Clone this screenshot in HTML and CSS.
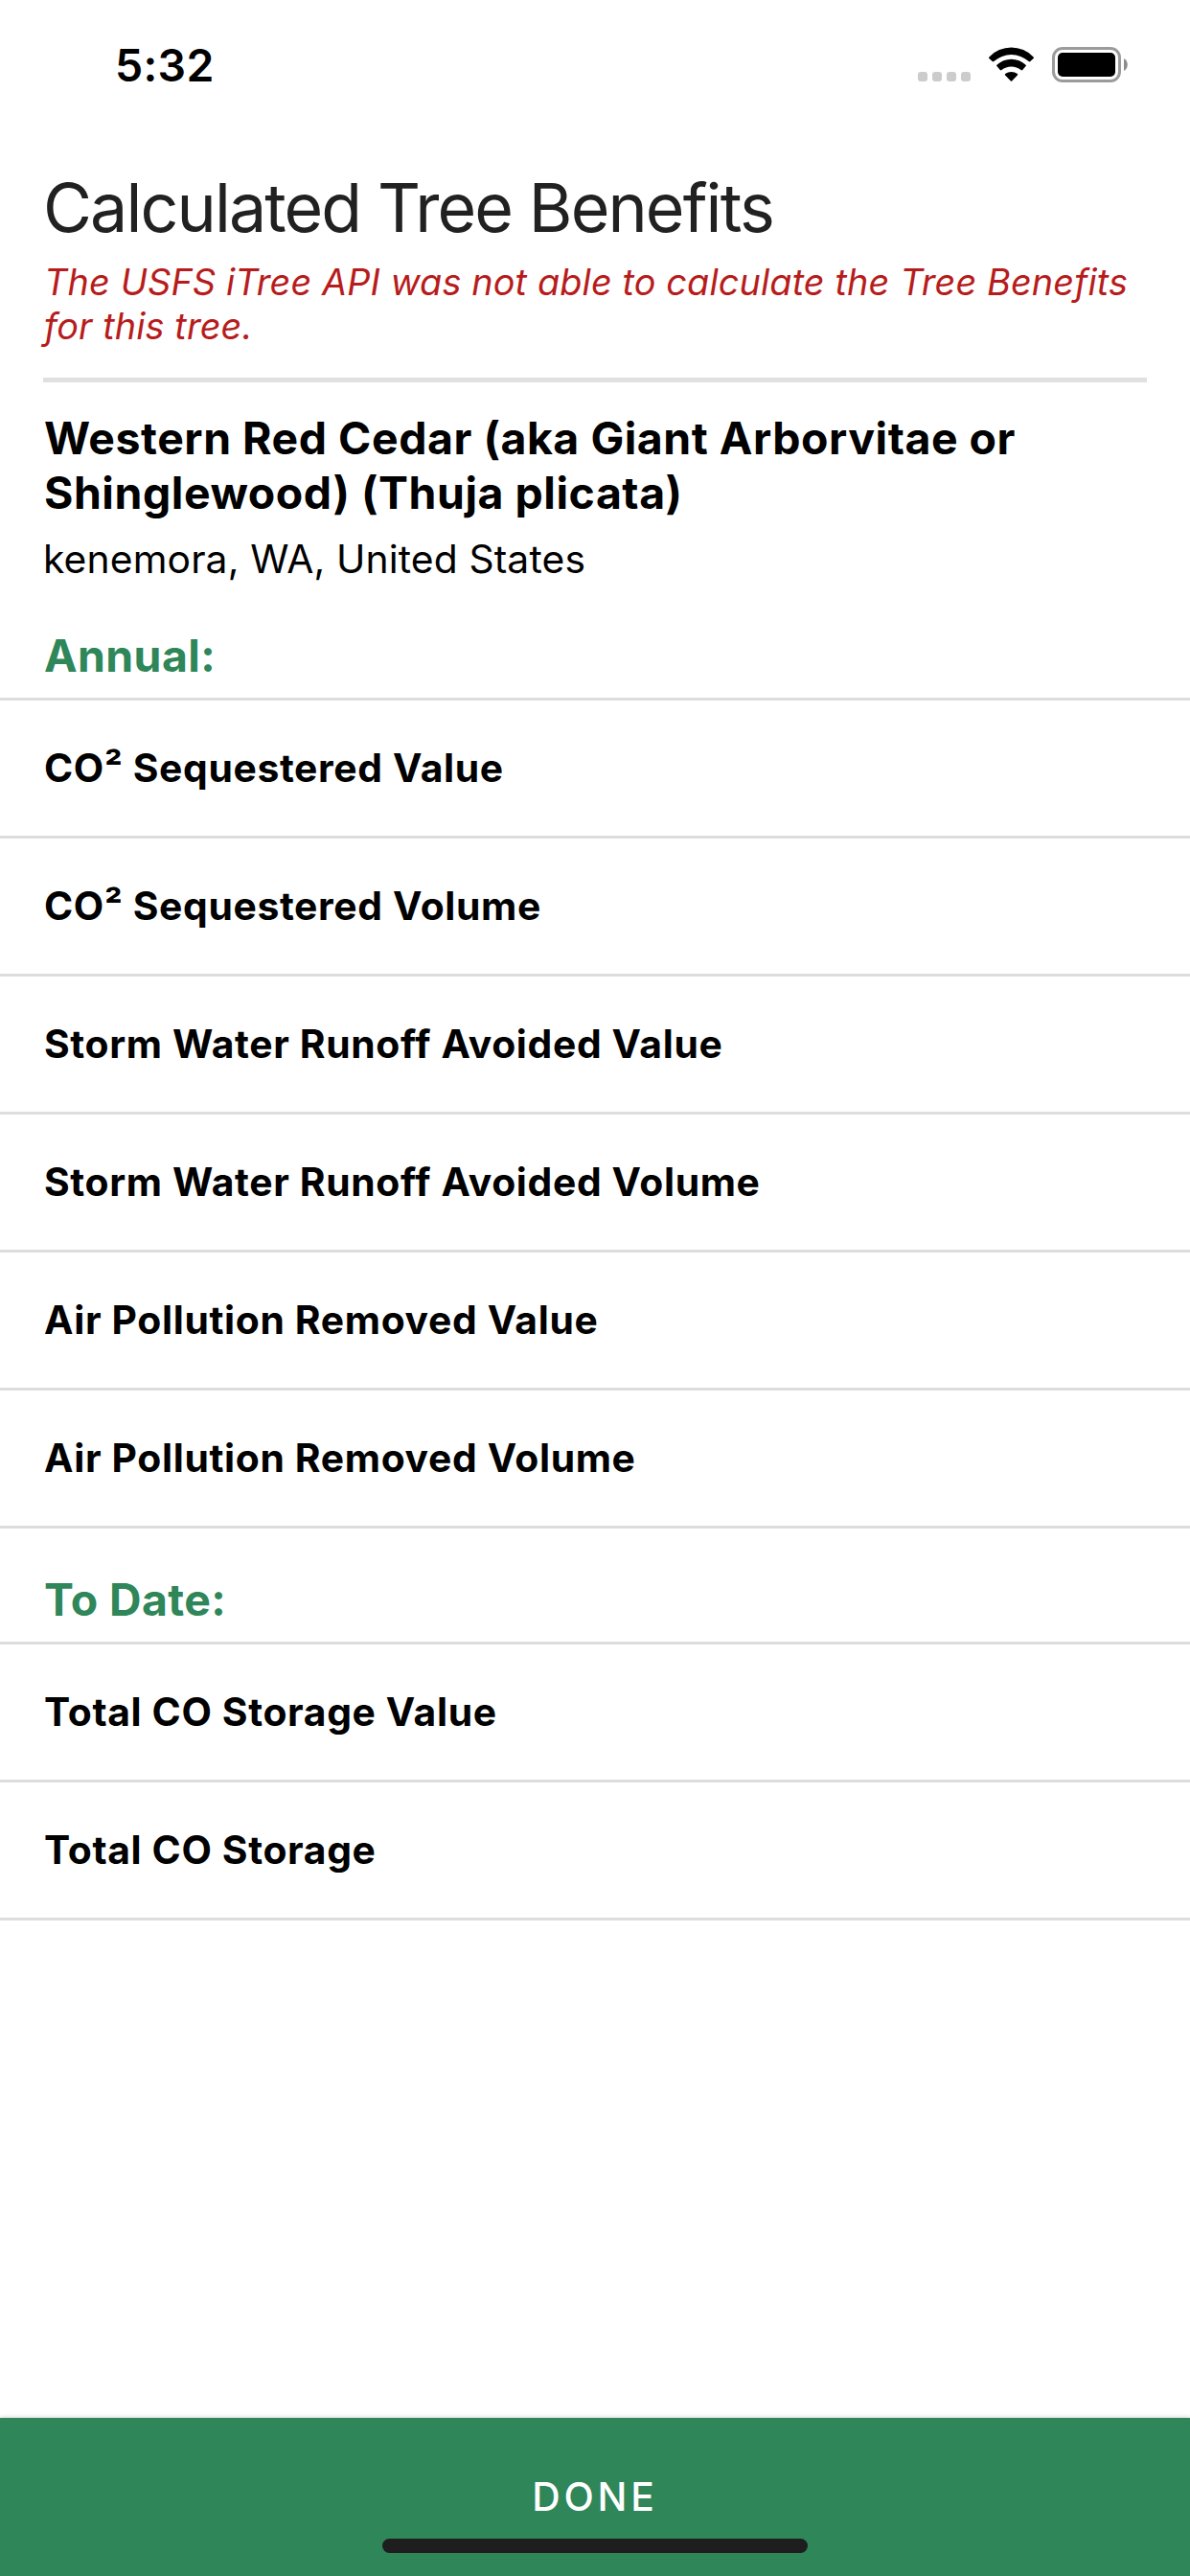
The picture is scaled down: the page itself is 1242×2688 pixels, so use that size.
FILE: index.html
```html
<!DOCTYPE html>
<html lang="en">
<head>
<meta charset="utf-8">
<title>Calculated Tree Benefits</title>
<link rel="stylesheet" href="styles.css">
</head>
<body>
<div class="screen">
  <header class="status-bar">
    <span class="time">5:32</span>
    <div class="status-icons">
      <svg class="signal" width="55" height="10" viewBox="0 0 55 10" fill="#ccc" aria-hidden="true">
        <rect x="0" width="10" height="10" rx="3"/><rect x="15" width="10" height="10" rx="3"/><rect x="30" width="10" height="10" rx="3"/><rect x="45" width="10" height="10" rx="3"/>
      </svg>
      <svg class="wifi" width="49" height="38" viewBox="0 0 49 38" aria-hidden="true">
        <path d="M1.4 11.4A32 32 0 0 1 47.6 11.4Q48.4 12.2 47.6 13L44.3 16.1Q43.5 16.8 42.7 16.1A27.2 27.2 0 0 0 6.3 16.1Q5.5 16.8 4.7 16.1L1.4 13Q.6 12.2 1.4 11.4Z"/>
        <path d="M9.4 19.7A22 22 0 0 1 39.6 19.7Q40.3 20.4 39.6 21.1L36.2 25Q35.4 25.8 34.6 25.1A16 16 0 0 0 14.4 25.1Q13.6 25.8 12.8 25L9.4 21.1Q8.7 20.4 9.4 19.7Z"/>
        <path d="M18.1 29.1A10.5 10.5 0 0 1 30.9 29.1Q31.6 29.8 30.9 30.5L25.1 36.4Q24.5 37 23.9 36.4L18.1 30.5Q17.4 29.8 18.1 29.1Z"/>
      </svg>
      <svg class="battery" width="79" height="37" viewBox="0 0 79 37" aria-hidden="true">
        <rect x="1.5" y="1.5" width="69" height="34" rx="9.5" fill="none" stroke="#9b9b9b" stroke-width="3"/>
        <rect x="6" y="6" width="60" height="25" rx="5"/>
        <path d="M75 12C80 14.5 80 22.500 75 25Z" fill="#8c8c8c"/>
      </svg>
    </div>
  </header>

  <main class="content">
    <h1 class="title">Calculated Tree Benefits</h1>
    <p class="error">The USFS iTree API was not able to calculate the Tree Benefits<br>for this tree.</p>
    <hr class="divider">
    <h2 class="species">Western Red Cedar (aka Giant Arborvitae or<br>Shinglewood) (Thuja plicata)</h2>
    <p class="place">kenemora, WA, United States</p>

    <section class="group">
      <h3 class="group-title">Annual:</h3>
      <ul class="rows">
        <li class="row">CO² Sequestered Value</li>
        <li class="row">CO² Sequestered Volume</li>
        <li class="row">Storm Water Runoff Avoided Value</li>
        <li class="row">Storm Water Runoff Avoided Volume</li>
        <li class="row">Air Pollution Removed Value</li>
        <li class="row">Air Pollution Removed Volume</li>
      </ul>
    </section>

    <section class="group">
      <h3 class="group-title">To Date:</h3>
      <ul class="rows">
        <li class="row">Total CO Storage Value</li>
        <li class="row">Total CO Storage</li>
      </ul>
    </section>
  </main>

  <footer class="done-bar">
    <span class="done">DONE</span>
    <div class="home-indicator"></div>
  </footer>
</div>
</body>
</html>
```
FILE: styles.css
```css
* { box-sizing: border-box; margin: 0; padding: 0; }

body {
  background: #fff;
  color: #000;
  font-family: Inter, "Liberation Sans", sans-serif;
}

.screen {
  display: flex;
  flex-direction: column;
  width: 1242px;
  height: 2688px;
  overflow: hidden;
}

.status-bar {
  display: flex;
  justify-content: space-between;
  height: 132px;
  padding: 40px 65px 0 120px;
}

.time {
  font-size: 46.4px;
  font-weight: 600;
  line-height: 56px;
  letter-spacing: 0.3px;
}

.status-icons {
  display: flex;
  align-items: flex-start;
  padding-top: 8px;
}

.signal { margin-top: 27px; }
.wifi { margin-left: 18px; }
.battery { margin: 1px 0 0 18px; }

.content {
  flex: 1;
  padding-top: 42px;
}

.title {
  margin: 0 45px;
  color: #212121;
  font-size: 69.8px;
  font-weight: 400;
  line-height: 85px;
  letter-spacing: -1.87px;
  white-space: nowrap;
}

.error {
  margin: 12px 45px 0 46px;
  color: #b71c1c;
  font-size: 37.8px;
  font-style: italic;
  line-height: 46px;
  letter-spacing: 0.147px;
  white-space: nowrap;
}

.divider {
  height: 5px;
  margin: 31px 45px 0;
  border: 0;
  background: #e0e0e0;
}

.species {
  margin: 30px 45px 0 46px;
  font-size: 46.4px;
  font-weight: 700;
  line-height: 57px;
  letter-spacing: 0.55px;
  white-space: nowrap;
}

.place {
  margin: 15px 45px 0;
  font-size: 40.8px;
  line-height: 50px;
  letter-spacing: 0.131px;
}

.group-title {
  padding: 48px 45px 16px 46px;
  border-bottom: 3px solid #ddd;
  color: #2e8659;
  font-size: 46.4px;
  font-weight: 700;
  line-height: 56px;
  letter-spacing: 0.4px;
}

.group + .group .group-title { padding-top: 46px; }

.rows { list-style: none; }

.row {
  padding: 45px 45px 46px 46px;
  border-bottom: 3px solid #ddd;
  font-size: 40.8px;
  font-weight: 700;
  line-height: 50px;
  letter-spacing: 0.66px;
}

.done-bar {
  display: flex;
  flex-direction: column;
  align-items: center;
  height: 165px;
  padding-top: 57px;
  background: #2e8659;
  box-shadow: 0 -1px 4px rgba(0, 0, 0, 0.16);
}

.done {
  color: #fff;
  font-size: 40.8px;
  font-weight: 500;
  line-height: 50px;
  letter-spacing: 3.8px;
}

.home-indicator {
  width: 444px;
  height: 15px;
  margin-top: 19px;
  border-radius: 8px;
  background: #1e1e1e;
}
```
